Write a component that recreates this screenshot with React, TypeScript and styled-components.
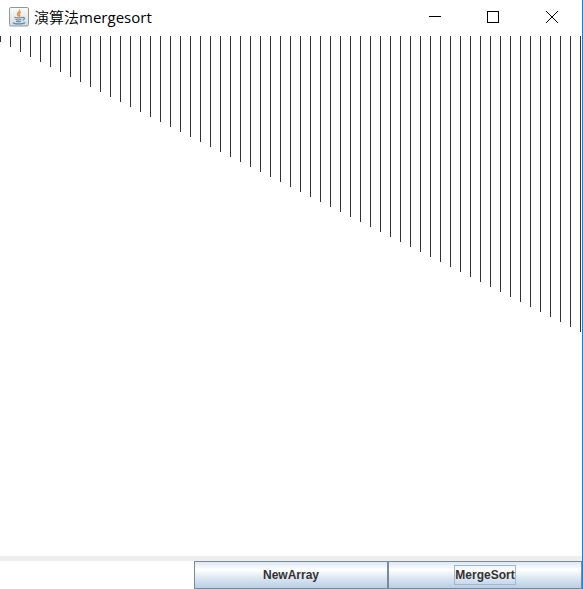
import React from "react";
import styled, { createGlobalStyle } from "styled-components";

const GlobalStyle = createGlobalStyle`
  * { box-sizing: border-box; }
  html, body { margin: 0; padding: 0; background: #fff; overflow: hidden; }
`;

const Frame = styled.main`
  display: flex;
  flex-direction: column;
  width: 583px;
  height: 589px;
  border-right: 1px solid #1883d7;
  background: #fff;
`;

const TitleBar = styled.header`
  display: flex;
  align-items: center;
  flex: 0 0 36px;
  height: 36px;
  padding: 0 7px 3px 9px;
`;

const AppIcon = styled.svg`
  flex: none;
  width: 20px;
  height: 20px;
  margin-right: 5px;
`;

const Title = styled.h1`
  display: flex;
  flex: 1;
  margin: 0;
  font: 400 15px/20px "Open Sans", "Noto Sans CJK TC", sans-serif;
  color: #000;
  white-space: nowrap;
`;

const Han = styled.span`
  font-family: "Noto Sans CJK TC", sans-serif;
  font-weight: 350;
`;

const Latin = styled.span`
  letter-spacing: 0.02px;
`;

const Controls = styled.div`
  display: flex;
  gap: 14px;
`;

const ControlButton = styled.button`
  display: grid;
  place-items: center;
  width: 45px;
  height: 33px;
  padding: 0;
  border: 0;
  background: none;
`;

const ControlGlyph = styled.svg`
  display: block;
  width: 13px;
  height: 13px;
  fill: none;
  stroke: #000;
`;

const Chart = styled.svg`
  display: block;
  flex: 0 0 520px;
  width: 582px;
  height: 520px;
`;

const Divider = styled.div`
  flex: 0 0 5px;
  background: #eee;
`;

const ButtonGrid = styled.footer`
  display: grid;
  grid-template-columns: repeat(3, 194px);
  flex: 0 0 28px;
`;

const ActionButton = styled.button<{ $column: number }>`
  grid-column: ${(p) => p.$column};
  display: flex;
  align-items: center;
  justify-content: center;
  height: 28px;
  padding: 0;
  border: 1px solid #7a8a99;
  border-radius: 0;
  background: linear-gradient(#dde8f3 0%, #fff 30%, #dde8f3 60%, #b8cfe5 100%);
  font: 700 12px/16px "Liberation Sans", Arial, sans-serif;
  color: #333;
`;

const Label = styled.span<{ $focused?: boolean }>`
  height: 20px;
  border: 1px solid ${(p) => (p.$focused ? "#a3b8cc" : "transparent")};
  line-height: 18px;
`;

const bars = Array.from({ length: 59 }, (_, i) => ({ x: i * 10, height: 6 + i * 5 }));

export default function App() {
  return (
    <>
      <GlobalStyle />
      <Frame>
        <TitleBar>
          <AppIcon viewBox="0 0 20 20" aria-hidden="true">
            <defs>
              <linearGradient id="tile" x2="0" y2="1">
                <stop stopColor="#fbfcfc" />
                <stop offset="1" stopColor="#d5dadc" />
              </linearGradient>
            </defs>
            <rect x=".5" y=".5" width="19" height="18.5" rx="1.5" fill="url(#tile)" stroke="#8e989e" />
            <path d="M10.5 2.5c1.5 2-3 3-2 5 .2.8 1 1.2 1 2M12 5c-2 1-2.6 2-1.5 3 .6.8 0 1.3-.4 1.7" fill="none" stroke="#ef8a45" strokeWidth="1.3" />
            <path d="M5.5 10.2c2 .9 6 .9 7.7 0M6.3 12.3c1.7.8 4.4.8 6 0M7 14.2c1.3.6 3.6.6 5 0M4 15.7c1.5 1.8 10 1.7 12-.2M13.3 10.5c2.8-.6 2.8 2 .3 2.8" fill="none" stroke="#6289a9" strokeWidth="1.25" />
          </AppIcon>
          <Title><Han>演算法</Han><Latin>mergesort</Latin></Title>
          <Controls>
            <ControlButton aria-label="Minimize">
              <ControlGlyph viewBox="0 0 13 13" shapeRendering="crispEdges"><path d="M1 6.5h12" /></ControlGlyph>
            </ControlButton>
            <ControlButton aria-label="Maximize">
              <ControlGlyph viewBox="0 0 13 13" shapeRendering="crispEdges"><rect x=".5" y="1.5" width="11" height="11" /></ControlGlyph>
            </ControlButton>
            <ControlButton aria-label="Close">
              <ControlGlyph viewBox="0 0 13 13"><path d="M0 1l12 12M12 1L0 13" /></ControlGlyph>
            </ControlButton>
          </Controls>
        </TitleBar>
        <Chart viewBox="0 0 582 520" shapeRendering="crispEdges">
          {bars.map((bar) => (
            <rect key={bar.x} x={bar.x} y="0" width="1" height={bar.height} fill="#333" />
          ))}
        </Chart>
        <Divider />
        <ButtonGrid>
          <ActionButton $column={2}><Label>NewArray</Label></ActionButton>
          <ActionButton $column={3}><Label $focused>MergeSort</Label></ActionButton>
        </ButtonGrid>
      </Frame>
    </>
  );
}
